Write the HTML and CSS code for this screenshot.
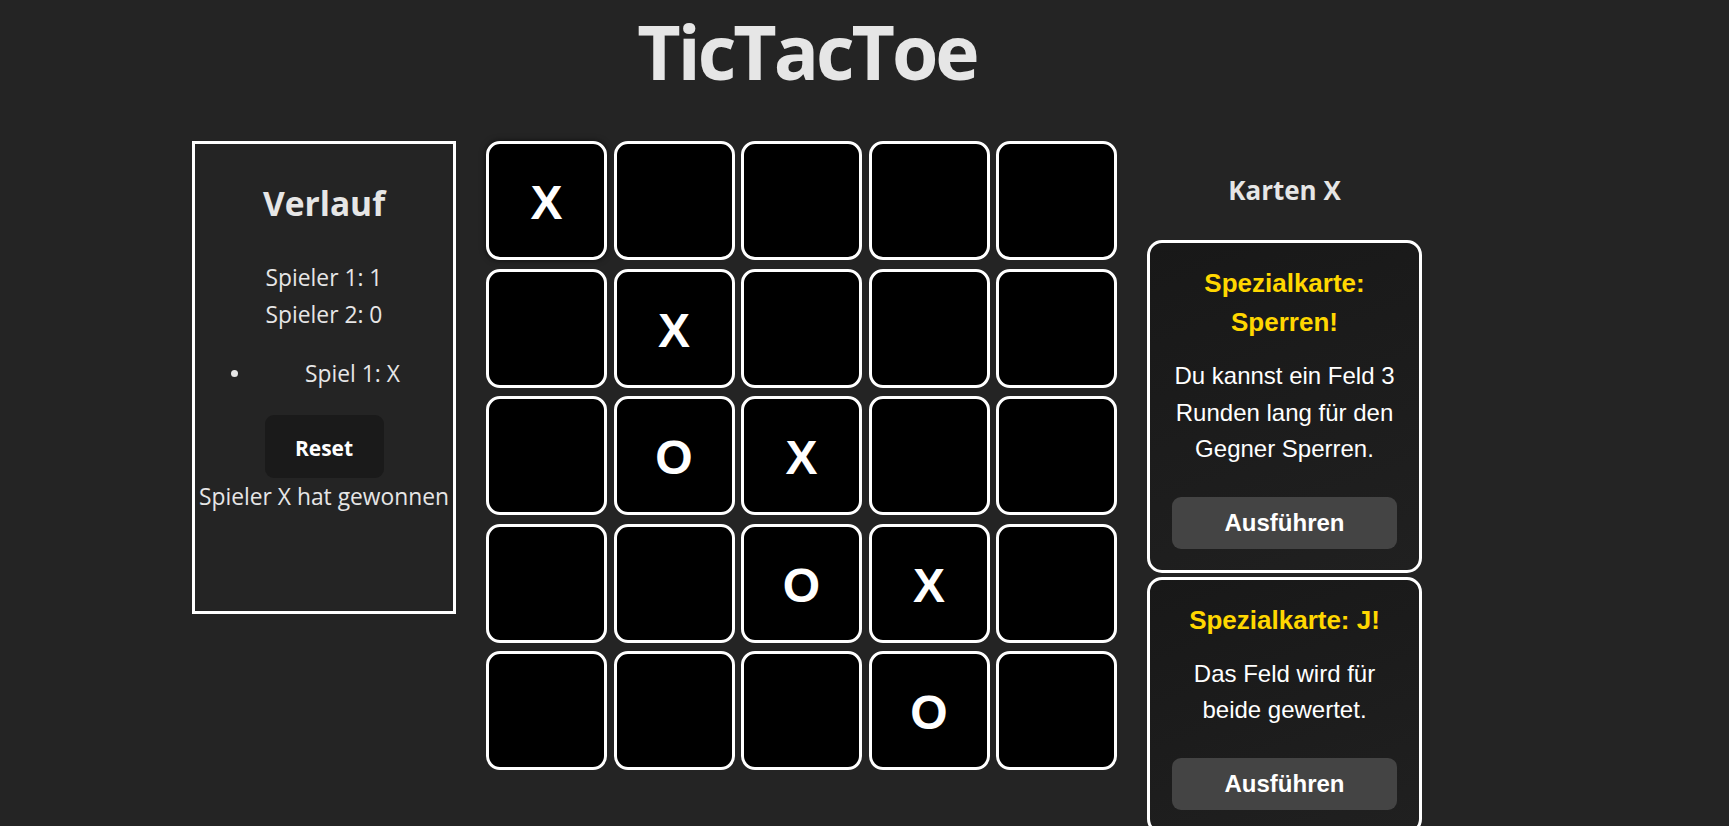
FILE: index.html
```html
<!DOCTYPE html>
<html lang="de">
<head>
<meta charset="utf-8">
<title>TicTacToe</title>
<link rel="stylesheet" href="styles.css">
</head>
<body>
<div class="page">
  <h1 class="title">TicTacToe</h1>
  <div class="main">
    <section class="history">
      <h2 class="history-title">Verlauf</h2>
      <div class="scores">
        <p>Spieler 1: 1</p>
        <p>Spieler 2: 0</p>
      </div>
      <ul class="games">
        <li><span class="bullet"></span><span>Spiel 1: X</span></li>
      </ul>
      <button class="reset">Reset</button>
      <p class="winner">Spieler X hat gewonnen</p>
    </section>

    <div class="board">
      <div class="cell first">X</div><div class="cell"></div><div class="cell"></div><div class="cell"></div><div class="cell"></div>
      <div class="cell"></div><div class="cell">X</div><div class="cell"></div><div class="cell"></div><div class="cell"></div>
      <div class="cell"></div><div class="cell">O</div><div class="cell">X</div><div class="cell"></div><div class="cell"></div>
      <div class="cell"></div><div class="cell"></div><div class="cell">O</div><div class="cell">X</div><div class="cell"></div>
      <div class="cell"></div><div class="cell"></div><div class="cell"></div><div class="cell">O</div><div class="cell"></div>
    </div>

    <aside class="cards">
      <h3 class="cards-title">Karten X</h3>
      <div class="card">
        <h4 class="card-title">Spezialkarte: Sperren!</h4>
        <p class="card-text">Du kannst ein Feld 3 Runden lang für den Gegner Sperren.</p>
        <button class="card-btn">Ausführen</button>
      </div>
      <div class="card">
        <h4 class="card-title">Spezialkarte: J!</h4>
        <p class="card-text">Das Feld wird für beide gewertet.</p>
        <button class="card-btn">Ausführen</button>
      </div>
    </aside>
  </div>
</div>
</body>
</html>
```

FILE: styles.css
```css
* { box-sizing: border-box; }

html, body {
  margin: 0;
  background: #242424;
  color: #e6e6e6;
  font-family: "Open Sans", "Noto Sans", sans-serif;
  overflow: hidden;
}

.page {
  width: 1230px;
  margin-left: 192px;
}

.title {
  margin: 0 0 39px;
  font-size: 75px;
  line-height: 102px;
  font-weight: 700;
  text-align: center;
  color: #e6e6e6;
  letter-spacing: -3px;
}

.main {
  display: flex;
  align-items: flex-start;
  gap: 30px;
}

/* History panel */
.history {
  width: 264px;
  height: 473px;
  border: 3px solid #ffffff;
  text-align: center;
  padding-top: 37px;
  display: flex;
  flex-direction: column;
  align-items: center;
}

.history-title {
  margin: 0;
  font-size: 33.5px;
  line-height: 44px;
  font-weight: 700;
}

.scores {
  margin-top: 34px;
  font-size: 22.8px;
  line-height: 37px;
}

.scores p { margin: 0; }

.games {
  list-style: none;
  margin: 23px 0 0;
  padding: 0;
  align-self: stretch;
  font-size: 22.8px;
  line-height: 35px;
}

.games li {
  display: flex;
  align-items: center;
  padding-left: 36px;
  gap: 67px;
}

.bullet {
  width: 7px;
  height: 7px;
  border-radius: 50%;
  background: #e6e6e6;
}

.reset {
  margin-top: 24px;
  width: 119px;
  height: 63px;
  border: none;
  border-radius: 9px;
  background: #1a1a1a;
  color: #ffffff;
  font-family: "Open Sans", "Noto Sans", sans-serif;
  font-size: 21px;
  font-weight: 700;
  padding-top: 4px;
}

.winner {
  margin: 1px 0 0;
  font-size: 22.8px;
  line-height: 35px;
  white-space: nowrap;
}

/* Board */
.board {
  width: 631px;
  display: grid;
  grid-template-columns: repeat(5, 121px);
  grid-auto-rows: 119px;
  column-gap: 6.5px;
  row-gap: 8.5px;
}

.cell {
  background: #000000;
  border: 3px solid #ffffff;
  border-radius: 14px;
  display: flex;
  align-items: center;
  justify-content: center;
  padding-top: 4px;
  color: #ffffff;
  font-family: "Liberation Sans", Arial, sans-serif;
  font-weight: 700;
  font-size: 48px;
}

.cell.first {
  box-shadow: 0 0 6px rgba(0, 0, 0, 0.6);
}

/* Cards */
.cards {
  width: 275px;
  display: flex;
  flex-direction: column;
  gap: 4px;
}

.cards-title {
  margin: 31px 0 28px;
  font-size: 26px;
  line-height: 36px;
  font-weight: 700;
  text-align: center;
}

.card {
  border: 3px solid #ffffff;
  border-radius: 15px;
  background: linear-gradient(160deg, #181818, #202020);
  padding: 21px 22px 21px;
  text-align: center;
  font-family: "Liberation Sans", Arial, sans-serif;
}

.card-title {
  margin: 0 0 16px;
  color: #ffd700;
  font-size: 26px;
  line-height: 39px;
  font-weight: 700;
}

.card-text {
  margin: 0 0 29px;
  color: #ffffff;
  font-size: 24px;
  line-height: 36.5px;
}

.card-btn {
  display: block;
  width: 100%;
  height: 52px;
  border: none;
  border-radius: 9px;
  background: #444444;
  color: #ffffff;
  font-family: "Liberation Sans", Arial, sans-serif;
  font-size: 24px;
  font-weight: 700;
}
```
